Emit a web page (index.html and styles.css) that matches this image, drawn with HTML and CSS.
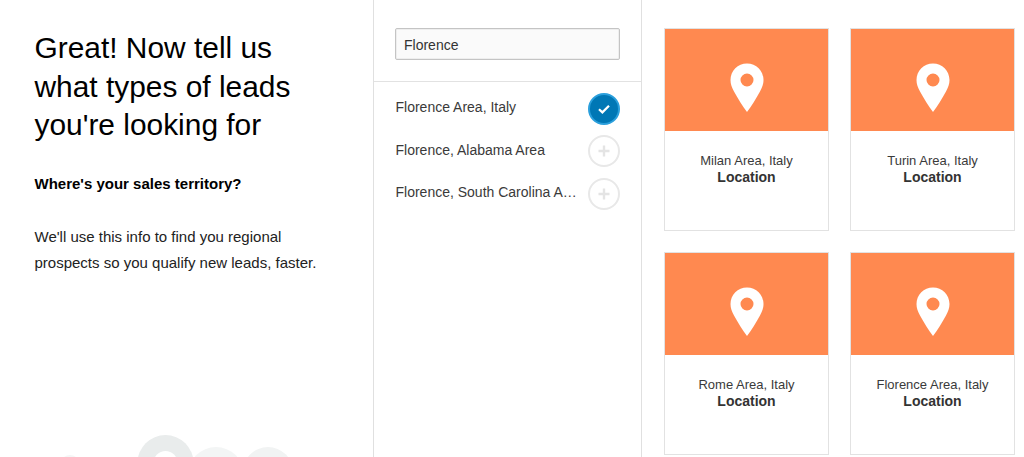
FILE: index.html
```html
<!DOCTYPE html>
<html lang="en">
<head>
<meta charset="utf-8">
<title>Sales territory</title>
<link rel="stylesheet" href="styles.css">
</head>
<body>
<div class="page">
  <section class="intro">
    <h1 class="title">Great! Now tell us what types of leads you're looking for</h1>
    <h2 class="subtitle">Where's your sales territory?</h2>
    <p class="copy">We'll use this info to find you regional prospects so you qualify new leads, faster.</p>
    <svg class="art" width="373" height="30" viewBox="0 0 373 30" aria-hidden="true">
      <circle cx="70" cy="38" r="10" fill="#f5f6f6"/>
      <circle cx="216" cy="48" r="28" fill="#f3f5f5"/>
      <circle cx="268" cy="45" r="25" fill="#f1f3f3"/>
      <circle cx="165.500" cy="36" r="28" fill="#e9ecec"/>
      <circle cx="165.500" cy="36" r="12" fill="#fff"/>
    </svg>
  </section>
  <section class="search">
    <div class="search-top">
      <input class="field" type="text" value="Florence">
    </div>
    <ul class="results">
      <li class="result"><span class="result-name">Florence Area, Italy</span>
        <span class="toggle on"><svg width="14" height="12" viewBox="0 0 14 12"><path d="M2 6.200 5.400 9.400 12 2.800" fill="none" stroke="#fff" stroke-width="2.200"/></svg></span></li>
      <li class="result"><span class="result-name">Florence, Alabama Area</span>
        <span class="toggle"><svg width="14" height="14" viewBox="0 0 14 14"><path d="M7 1.500v11M1.500 7h11" fill="none" stroke="#e4e4e4" stroke-width="2.400"/></svg></span></li>
      <li class="result"><span class="result-name">Florence, South Carolina A…</span>
        <span class="toggle"><svg width="14" height="14" viewBox="0 0 14 14"><path d="M7 1.500v11M1.500 7h11" fill="none" stroke="#e4e4e4" stroke-width="2.400"/></svg></span></li>
    </ul>
  </section>
  <section class="cards">
    <article class="card">
      <div class="card-top"><svg class="pin" width="34" height="50" viewBox="0 0 34 50"><path fill-rule="evenodd" fill="#fff" d="M17 .5C7.800.5.500 7.800.500 17c0 4 1.300 7.500 3.500 11.500C7.500 35 12.500 43 17 49c4.500-6 9.500-14 13-20.500 2.200-4 3.500-7.500 3.500-11.500C33.500 7.800 26.200.5 17 .5ZM17 10.500a6.500 6.500 0 1 1 0 13 6.500 6.500 0 0 1 0-13Z"/></svg></div>
      <div class="card-body"><div class="card-name">Milan Area, Italy</div><div class="card-type">Location</div></div>
    </article>
    <article class="card">
      <div class="card-top"><svg class="pin" width="34" height="50" viewBox="0 0 34 50"><path fill-rule="evenodd" fill="#fff" d="M17 .5C7.800.5.500 7.800.500 17c0 4 1.300 7.500 3.500 11.500C7.500 35 12.500 43 17 49c4.500-6 9.500-14 13-20.500 2.200-4 3.500-7.500 3.500-11.500C33.500 7.800 26.200.5 17 .5ZM17 10.500a6.500 6.500 0 1 1 0 13 6.500 6.500 0 0 1 0-13Z"/></svg></div>
      <div class="card-body"><div class="card-name">Turin Area, Italy</div><div class="card-type">Location</div></div>
    </article>
    <article class="card">
      <div class="card-top"><svg class="pin" width="34" height="50" viewBox="0 0 34 50"><path fill-rule="evenodd" fill="#fff" d="M17 .5C7.800.5.500 7.800.500 17c0 4 1.300 7.500 3.500 11.500C7.500 35 12.500 43 17 49c4.500-6 9.500-14 13-20.500 2.200-4 3.500-7.500 3.500-11.500C33.500 7.800 26.200.5 17 .5ZM17 10.500a6.500 6.500 0 1 1 0 13 6.500 6.500 0 0 1 0-13Z"/></svg></div>
      <div class="card-body"><div class="card-name">Rome Area, Italy</div><div class="card-type">Location</div></div>
    </article>
    <article class="card">
      <div class="card-top"><svg class="pin" width="34" height="50" viewBox="0 0 34 50"><path fill-rule="evenodd" fill="#fff" d="M17 .5C7.800.5.500 7.800.500 17c0 4 1.300 7.500 3.500 11.500C7.500 35 12.500 43 17 49c4.500-6 9.500-14 13-20.500 2.200-4 3.500-7.500 3.500-11.500C33.500 7.800 26.200.5 17 .5ZM17 10.500a6.500 6.500 0 1 1 0 13 6.500 6.500 0 0 1 0-13Z"/></svg></div>
      <div class="card-body"><div class="card-name">Florence Area, Italy</div><div class="card-type">Location</div></div>
    </article>
  </section>
</div>
</body>
</html>
```

FILE: styles.css
```css
* { box-sizing: border-box; }
html, body { margin: 0; height: 100%; overflow: hidden; background: #fff; }
body { font-family: "Liberation Sans", Arial, sans-serif; color: #333; }
.page { display: flex; width: 1024px; height: 457px; overflow: hidden; }

.intro { position: relative; width: 374px; height: 457px; padding: 29px 40px 0 34.500px; border-right: 1px solid #e0e0e0; color: #000; }
.title { margin: 0; font-size: 29.900px; line-height: 38.500px; font-weight: 400; }
.subtitle { margin: 29px 0 0; font-size: 15px; line-height: 20px; font-weight: 700; }
.copy { width: 290px; margin: 30px 0 0; font-size: 15px; line-height: 26px; color: #222; }
.art { position: absolute; left: 0; bottom: 0; }

.search { width: 268px; height: 457px; border-right: 1px solid #e0e0e0; }
.search-top { height: 82px; padding: 28px 21px 0 21px; border-bottom: 1px solid #e2e2e2; }
.field { display: block; width: 225px; height: 32px; padding: 2px 8px 0 8px; border: 1px solid #c4c4c4; border-radius: 2px; background: #fafafa; box-shadow: inset 0 0 0 1px #eee; font: 14px "Liberation Sans", Arial, sans-serif; color: #333; outline: none; }
.results { margin: 0; padding: 0; list-style: none; }
.result { display: flex; align-items: center; justify-content: space-between; height: 42.500px; padding: 0 21px 0 21.500px; font-size: 14px; color: #3a3a3a; }
.result:first-child { margin-top: 5px; }
.result-name { position: relative; top: -1px; }
.toggle { display: flex; align-items: center; justify-content: center; width: 32px; height: 32px; margin-top: 1px; border-radius: 50%; border: 2px solid #e8e8e8; }
.toggle.on { background: #0077b5; border-color: #2a9fdc; }

.cards { display: grid; grid-template-columns: 165px 165px; grid-auto-rows: 203px; gap: 21px 21px; padding: 28px 0 0 22px; }
.card { border: 1px solid #e2e2e2; background: #fff; }
.card-top { display: flex; align-items: center; justify-content: center; height: 102px; background: #ff8950; }
.pin { display: block; margin-top: 15px; }
.card-body { padding-top: 22px; text-align: center; }
.card-name { font-size: 13px; line-height: 16px; color: #3a3a3a; }
.card-type { margin-top: -1px; font-size: 14px; line-height: 18px; font-weight: 700; color: #333; }
```
